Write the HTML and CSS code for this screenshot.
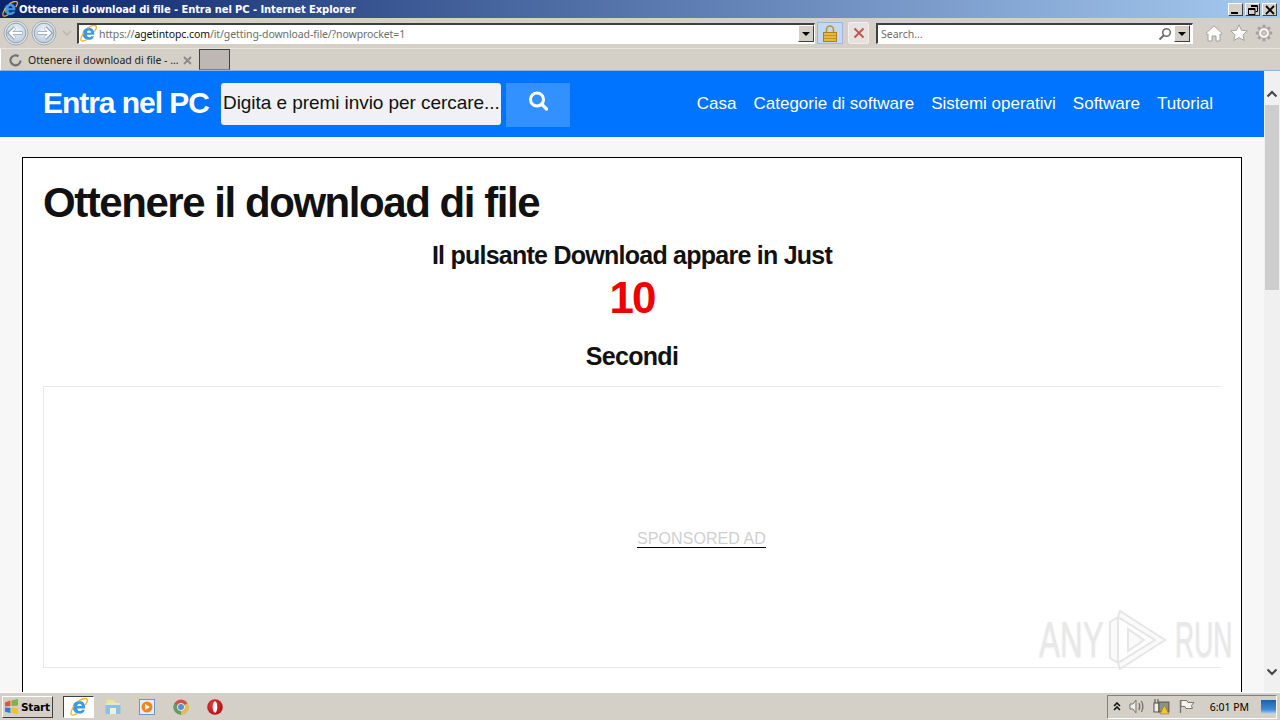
FILE: index.html
```html
<!DOCTYPE html>
<html lang="it">
<head>
  <meta charset="UTF-8" />
  <title>Ottenere il download di file - Entra nel PC</title>
  <link rel="stylesheet" href="styles.css">
</head>
<body>
  <svg class="defs" width="0" height="0">
    <defs>
      <radialGradient id="nav-fill" cx="50%" cy="35%" r="70%">
        <stop offset="0" stop-color="#eef3f8"/>
        <stop offset="1" stop-color="#b9cadb"/>
      </radialGradient>
      <radialGradient id="opera-fill" cx="40%" cy="35%" r="70%">
        <stop offset="0" stop-color="#ee3a3a"/>
        <stop offset="1" stop-color="#a80f14"/>
      </radialGradient>
    </defs>
    <symbol id="ie" viewBox="0 0 18 18">
      <path d="M2.800 9.800C2.800 5.500 5.700 3 9.400 3c3.800 0 6 2.700 5.700 7.400H7.300c.2 1.700 1.100 2.600 2.500 2.600 1 0 1.700-.4 2.100-1.200h3c-.8 2.500-2.900 3.900-5.300 3.900-3.800 0-6.800-2.500-6.800-5.900zM7.300 8.100h4.500C11.700 6.700 10.800 5.800 9.500 5.800 8.300 5.800 7.500 6.700 7.300 8.100z" fill="#3a9be6"/>
      <path d="M4 8C1.800 11.500.3 14.800 1.200 16.300c.9 1.400 3.600.6 6-1M8 3.500C11.500 1 15.500-.2 16.800 1c1 1 .3 3.500-1.500 6" fill="none" stroke="#efb529" stroke-width="1.400"/>
    </symbol>
    <symbol id="nav-arrow" viewBox="0 0 26 26">
      <circle cx="13" cy="13" r="12" fill="#dfe3e6" stroke="#a4aab0"/>
      <circle cx="13" cy="13" r="9.800" fill="url(#nav-fill)" stroke="#8fa1b3"/>
      <path d="M6.500 13h13M12 7.500L6.500 13l5.500 5.500" fill="none" stroke="#8ea2b6" stroke-width="3.600"/>
      <path d="M7 13h12M12 8L7 13l5 5" fill="none" stroke="#fff" stroke-width="2"/>
    </symbol>
  </svg>

  <div class="title-bar">
    <svg class="title-icon"><use href="#ie"/></svg>
    <span class="title-text">Ottenere il download di file - Entra nel PC - Internet Explorer</span>
    <div class="win-btns">
      <span class="win-btn"><i class="min-glyph"></i></span>
      <span class="win-btn"><svg width="10" height="10" viewBox="0 0 10 10"><path d="M3 .5h6.500v6H7.500M.5 3.500h6.500v6H.5zM.5 4.500h6.500M3 1.500h6.500" fill="none" stroke="#000"/></svg></span>
      <span class="win-btn"><svg width="10" height="10" viewBox="0 0 10 10"><path d="M1 1l8 8M9 1l-8 8" stroke="#000" stroke-width="1.800"/></svg></span>
    </div>
  </div>

  <div class="nav-bar">
    <div class="nav-arrows">
      <svg class="arrow"><use href="#nav-arrow"/></svg>
      <svg class="arrow flipped"><use href="#nav-arrow"/></svg>
      <svg class="arrow-drop" width="10" height="6" viewBox="0 0 10 6"><path d="M1 1l4 4 4-4" fill="none" stroke="#b8b4ac" stroke-width="1.400"/></svg>
    </div>
    <div class="field address">
      <svg class="addr-icon"><use href="#ie"/></svg>
      <span class="url">https://<b>agetintopc.com</b>/it/getting-download-file/?nowprocket=1</span>
      <span class="drop"></span>
    </div>
    <span class="addr-btn lock">
      <svg width="14" height="17" viewBox="0 0 14 17"><path d="M3.500 8V4.500a3.500 3.500 0 0 1 7 0V8" fill="none" stroke="#b8952a" stroke-width="1.600"/><rect x=".5" y="7.500" width="13" height="9" fill="#e8b83a" stroke="#a8841c"/><path d="M1 10.500h12M1 13.500h12" stroke="#c4961f"/></svg>
    </span>
    <span class="addr-btn stop">
      <svg width="12" height="12" viewBox="0 0 12 12"><path d="M1.500 1.500l9 9M10.500 1.500l-9 9" stroke="#c8504a" stroke-width="1.800"/></svg>
    </span>
    <div class="field search">
      <span class="search-text">Search...</span>
      <svg class="search-icon" width="14" height="14" viewBox="0 0 14 14"><circle cx="8.500" cy="5.500" r="3.800" fill="none" stroke="#6b6b68" stroke-width="1.500"/><path d="M5.800 8.200L1.500 12.500" stroke="#6b6b68" stroke-width="2"/></svg>
      <span class="drop"></span>
    </div>
    <div class="tool-icons">
      <svg width="18" height="18" viewBox="0 0 18 18"><path d="M.8 9.500L9 1.800l8.200 7.700-1.500 1-.7-.6V17h-4v-5H7v5H3V9.900l-.7.6z" fill="#fdfdfc" stroke="#a3a29c"/></svg>
      <svg width="18" height="18" viewBox="0 0 18 18"><path d="M9 .8l2.500 5.500 5.800.6-4.300 3.900 1.200 5.700L9 13.600l-5.200 2.900L5 10.800.7 6.900l5.800-.6z" fill="#fdfdfc" stroke="#a3a29c"/></svg>
      <svg width="18" height="18" viewBox="0 0 18 18"><path d="M9 .8v3.500M9 13.700v3.500M.8 9h3.500M13.700 9h3.500M3.200 3.200l2.500 2.500M12.300 12.300l2.500 2.500M14.800 3.200l-2.500 2.500M5.700 12.300l-2.500 2.500" stroke="#a3a29c" stroke-width="3"/><circle cx="9" cy="9" r="5.500" fill="#f4f4f2" stroke="#a3a29c"/><circle cx="9" cy="9" r="2.300" fill="#d4d0c8" stroke="#a3a29c"/></svg>
    </div>
  </div>

  <div class="tab-bar">
    <div class="tab">
      <svg class="spinner" width="13" height="13" viewBox="0 0 13 13"><path d="M9.500 2.300A5 5 0 1 0 11.500 6.500" fill="none" stroke="#6f7473" stroke-width="2.200"/></svg>
      <span class="tab-title">Ottenere il download di file - ...</span>
      <svg class="tab-close" width="9" height="9" viewBox="0 0 9 9"><path d="M1 1l7 7M8 1L1 8" stroke="#8a8a88" stroke-width="1.800"/></svg>
    </div>
    <div class="new-tab"></div>
  </div>

  <div class="viewport">
    <div class="page">
      <header class="site-header">
        <a class="brand">Entra nel PC</a>
        <div class="site-search">Digita e premi invio per cercare...</div>
        <span class="search-btn">
          <svg width="22" height="22" viewBox="0 0 22 22"><circle cx="10" cy="9.500" r="6.500" fill="none" stroke="#fff" stroke-width="3"/><path d="M14.500 14l5 5" stroke="#fff" stroke-width="3.200" stroke-linecap="round"/></svg>
        </span>
        <nav class="site-nav">
          <a>Casa</a>
          <a>Categorie di software</a>
          <a>Sistemi operativi</a>
          <a>Software</a>
          <a>Tutorial</a>
        </nav>
      </header>

      <main class="content">
        <article class="card">
          <h1>Ottenere il download di file</h1>
          <h3 class="appears">Il pulsante Download appare in Just</h3>
          <div class="countdown">10</div>
          <h3 class="seconds">Secondi</h3>
          <div class="ad-box"><span class="ad-label">SPONSORED AD</span></div>
        </article>
      </main>

      <div class="watermark">
        <span class="wm-any">ANY</span>
        <svg width="60" height="62" viewBox="0 0 60 62"><path d="M2 13v36l8 5V8zM10 8l2-6 45 29-45 29-2-6 37-23zM20 20v22l16-11z" fill="#fafafa" stroke="#e6e6e6" stroke-width="2"/></svg>
        <span class="wm-run">RUN</span>
      </div>
    </div>

    <div class="scrollbar">
      <svg class="scroll-arrow" width="12" height="8" viewBox="0 0 12 8"><path d="M1.500 6.500L6 2l4.500 4.500" fill="none" stroke="#444" stroke-width="2"/></svg>
      <div class="thumb"></div>
      <svg class="scroll-arrow bottom" width="12" height="8" viewBox="0 0 12 8"><path d="M1.500 1.500L6 6l4.500-4.500" fill="none" stroke="#444" stroke-width="2"/></svg>
    </div>
  </div>

  <footer class="taskbar">
    <span class="start">
      <svg width="15" height="15" viewBox="0 0 14 14"><path d="M1 3l5-1.500v5L1 7z" fill="#e2582a"/><path d="M7 1.300L13 0v6l-6 .6z" fill="#7cb342"/><path d="M1 8l5 .1v5L1 12z" fill="#2f7ed8"/><path d="M7 8.200l6 .2v5.600l-6-1z" fill="#f2c12e"/></svg>
      Start
    </span>
    <span class="task-sep"></span>
    <span class="task-ie"><svg width="18" height="18"><use href="#ie"/></svg></span>
    <svg class="task-icon" width="18" height="18" viewBox="0 0 18 18"><path d="M3 2h7l2 3H3z" fill="#f0e29a"/><path d="M1.500 5h15v11h-15z" fill="#8cc2e0"/><path d="M6 10h6v6H6z" fill="#eef0e0"/><path d="M1.500 5h15v2h-15z" fill="#dfe8d8"/></svg>
    <svg class="task-icon" width="18" height="18" viewBox="0 0 18 18"><rect x="1.500" y="1.500" width="15" height="15" fill="#e7eef6" stroke="#6f96c8"/><circle cx="9" cy="9" r="5.500" fill="#ea8a1e"/><path d="M7.200 6l4.600 3-4.600 3z" fill="#fff"/></svg>
    <svg class="task-icon" width="18" height="18" viewBox="0 0 18 18"><circle cx="9" cy="9" r="7.500" fill="#c9544a"/><path d="M9 9L15.500 5.200A7.500 7.500 0 0 1 9 16.500z" fill="#e3c04c"/><path d="M9 9v7.500A7.500 7.500 0 0 1 2.500 5.200z" fill="#5f9e66"/><circle cx="9" cy="9" r="3.600" fill="#5a8fcc" stroke="#eee"/></svg>
    <svg class="task-icon" width="18" height="18" viewBox="0 0 18 18"><circle cx="9" cy="9" r="7.800" fill="url(#opera-fill)"/><ellipse cx="9" cy="9" rx="2.300" ry="5.800" fill="#fff"/></svg>
    <div class="tray">
      <svg width="8" height="9" viewBox="0 0 8 9"><path d="M1 4l3-3 3 3M1 8l3-3 3 3" fill="none" stroke="#111" stroke-width="1.600"/></svg>
      <svg width="16" height="15" viewBox="0 0 16 15"><path d="M1 5h3l3-4v13l-3-4H1z" fill="#f0eee8" stroke="#77756f"/><path d="M10 4c1 2 1 5 0 7M12.500 2c1.800 3.500 1.800 7.500 0 11" fill="none" stroke="#77756f" stroke-width="1.300"/></svg>
      <svg width="17" height="17" viewBox="0 0 17 17"><path d="M2 1v4M5 1v4" stroke="#444"/><rect x="1" y="5" width="5" height="9" fill="#f0eee6" stroke="#55534c"/><rect x="6" y="4" width="10" height="10" fill="#8d9287" stroke="#55534c"/><path d="M11.500 7.500l4.500 8.500H7z" fill="#f2c925" stroke="#8a6d10" stroke-width=".5"/></svg>
      <svg width="17" height="15" viewBox="0 0 17 15"><path d="M2.500 1v13" stroke="#77756f" stroke-width="1.400"/><path d="M3 1.500h6l1 2h6l-2.500 3 1 3H8l-1-2H3z" fill="#f5f3ee" stroke="#77756f"/></svg>
      <span class="clock">6:01 PM</span>
      <span class="show-desktop"></span>
    </div>
  </footer>
</body>
</html>
```

FILE: styles.css
```css
* { box-sizing: border-box; }
html, body {
  margin: 0;
  height: 720px;
  overflow: hidden;
}
body {
  display: flex;
  flex-direction: column;
  font-family: "Liberation Sans", Arial, sans-serif;
  background: #d4d0c8;
  color: #000;
}
.defs { position: absolute; }

/* IE window chrome */
.title-bar {
  height: 18px;
  flex: none;
  display: flex;
  align-items: center;
  padding: 0 3px 0 2px;
  background: linear-gradient(90deg, #0a246a, #a6caf0);
}
.title-icon { width: 16px; height: 16px; margin-right: 1px; flex: none; }
.title-text {
  font: bold 10px "DejaVu Sans", Tahoma, sans-serif;
  letter-spacing: -0.1px;
  color: #fff;
  white-space: nowrap;
}
.win-btns { margin-left: auto; display: flex; gap: 2px; padding-top: 1px; }
.win-btn {
  width: 15px;
  height: 13px;
  background: #d4d0c8;
  border: 1px solid;
  border-color: #fff #404040 #404040 #fff;
  display: flex;
  align-items: center;
  justify-content: center;
}
.min-glyph { width: 7px; height: 2px; background: #000; margin: 6px 2px 0 0; }

.nav-bar {
  height: 30px;
  flex: none;
  display: flex;
  align-items: center;
}
.nav-arrows { display: flex; align-items: center; width: 77px; padding-left: 3px; flex: none; }
.arrow { width: 26px; height: 26px; margin-right: 2px; flex: none; }
.flipped { transform: scaleX(-1); }
.arrow-drop { margin-left: 3px; }
.field {
  height: 21px;
  display: flex;
  align-items: center;
  background: #fff;
  border: 1px solid;
  border-color: #404040 #fff #fff #404040;
  border-top-width: 2px;
  border-left-width: 2px;
}
.address { width: 738px; flex: none; }
.addr-icon { width: 17px; height: 17px; margin: 0 2px 0 1px; flex: none; }
.url {
  font: 10.500px "Noto Sans", Tahoma, sans-serif;
  letter-spacing: -0.1px;
  color: #6d6d6d;
  white-space: nowrap;
}
.url b { font-weight: normal; color: #111; }
.drop {
  width: 16px;
  height: 17px;
  margin-left: auto;
  background: #d4d0c8;
  border: 1px solid;
  border-color: #fff #404040 #404040 #fff;
  display: flex;
  align-items: center;
  justify-content: center;
  flex: none;
}
.drop::after {
  content: "";
  border: 4px solid transparent;
  border-top: 4px solid #000;
  border-bottom: 0;
}
.addr-btn {
  height: 22px;
  flex: none;
  display: flex;
  align-items: center;
  justify-content: center;
}
.lock { width: 26px; margin-left: 2px; background: #c4d8f2; border: 1px solid #9cb8dc; }
.stop { width: 21px; margin-left: 5px; background: #e6e2e0; border: 1px solid #f1eeec; border-radius: 2px; }
.search { width: 317px; flex: none; margin-left: 7px; padding-left: 3px; }
.search-text {
  font: 10.500px "Noto Sans", Tahoma, sans-serif;
  color: #6d6d6d;
}
.search-icon { margin-left: auto; margin-right: 2px; flex: none; }
.search .drop { margin-left: 0; margin-right: 2px; }
.tool-icons { display: flex; gap: 7px; margin-left: 12px; flex: none; }

.tab-bar {
  height: 22px;
  flex: none;
  display: flex;
  border-top: 1px solid #e6e3dd;
}
.tab {
  width: 197px;
  display: flex;
  align-items: center;
  padding: 1px 0 0 8px;
  border-left: 1px solid #fff;
}
.tab-title {
  font: 10.500px "Noto Sans", Tahoma, sans-serif;
  color: #222;
  margin-left: 6px;
  white-space: nowrap;
}
.tab-close { margin-left: auto; margin-right: 5px; }
.new-tab {
  width: 31px;
  margin-left: 2px;
  background: #bdb8b4;
  border: 1px solid;
  border-color: #404040 #404040 #808080 #404040;
}

/* page inside the browser */
.viewport {
  height: 622px;
  flex: none;
  display: flex;
  position: relative;
  overflow: hidden;
  background: #f7f7f7;
  border-top: 1px solid #8fb4dc;
}
.page { flex: 1; min-width: 0; overflow: hidden; }
.site-header {
  height: 66px;
  display: flex;
  align-items: center;
  padding: 0 51px 0 43px;
  background: #0073ff;
}
.brand {
  width: 166px;
  padding-bottom: 2px;
  font-size: 30px;
  font-weight: bold;
  letter-spacing: -1.050px;
  white-space: nowrap;
  color: #fff;
}
.site-search {
  width: 280px;
  height: 42px;
  margin-left: 12px;
  padding: 0 0 2px 2px;
  display: flex;
  align-items: center;
  font-size: 19px;
  letter-spacing: -0.060px;
  color: #111;
  background: #f0f0f5;
  border-radius: 3px;
  white-space: nowrap;
  overflow: hidden;
}
.search-btn {
  width: 64px;
  height: 44px;
  margin: 2px 0 0 5px;
  padding-bottom: 8px;
  display: flex;
  align-items: center;
  justify-content: center;
  background: #3390ff;
}
.site-nav { margin-left: auto; display: flex; gap: 17px; }
.site-nav a { font-size: 17px; color: #fff; white-space: nowrap; }

.content { padding: 20px 22px 0; }
.card {
  width: 1220px;
  height: 640px;
  padding: 20px;
  background: #fff;
  border: 1px solid #000;
}
h1 {
  margin: 0;
  font-size: 42px;
  line-height: 50px;
  letter-spacing: -1.450px;
  color: #111;
}
h3 {
  margin: 0;
  text-align: center;
  font-size: 25px;
  letter-spacing: -0.700px;
  color: #111;
}
.appears { margin-top: 12px; line-height: 30px; letter-spacing: -0.750px; }
.countdown {
  margin-top: 2px;
  text-align: center;
  font-size: 44px;
  font-weight: bold;
  line-height: 52px;
  letter-spacing: -2px;
  color: #f00000;
}
.seconds { margin-top: 17px; line-height: 30px; }
.ad-box {
  height: 282px;
  margin-top: 15px;
  padding-left: 593px;
  display: flex;
  align-items: center;
  border: 1px solid #e8e8e8;
  border-right: 0;
}
.ad-label {
  margin-top: 24px;
  font-size: 16px;
  line-height: 17px;
  letter-spacing: 0.080px;
  color: #cfcfcf;
  border-bottom: 1px solid #000;
}

.watermark {
  position: absolute;
  left: 1039px;
  top: 538px;
  display: flex;
  align-items: center;
  font-size: 50px;
  line-height: 62px;
  color: #e8e8e8;
  text-shadow: 0 1px 3px #eeeeee;
}
.watermark span { display: block; transform-origin: left; white-space: nowrap; }
.wm-any { width: 69px; transform: scaleX(0.63); }
.wm-run { width: 58px; margin-left: 7px; transform: scaleX(0.53); }

.scrollbar {
  width: 16px;
  flex: none;
  display: flex;
  flex-direction: column;
  align-items: center;
  background: #f0f0f0;
}
.scroll-arrow { margin-top: 19px; flex: none; }
.scroll-arrow.bottom { margin-top: auto; margin-bottom: 16px; }
.thumb {
  width: 14px;
  height: 185px;
  margin-top: 7px;
  background: #cdcdcd;
}

/* windows taskbar */
.taskbar {
  height: 28px;
  flex: none;
  display: flex;
  align-items: center;
  padding-left: 2px;
  background: #d4d0c8;
  border-top: 1px solid #fff;
}
.start {
  width: 51px;
  height: 22px;
  display: flex;
  align-items: center;
  gap: 2px;
  padding-left: 1px;
  font: bold 10.500px "DejaVu Sans", Tahoma, sans-serif;
  letter-spacing: -0.2px;
  border: 1px solid;
  border-color: #fff #404040 #404040 #fff;
}
.task-sep { width: 10px; }
.task-ie {
  width: 31px;
  height: 22px;
  display: flex;
  align-items: center;
  justify-content: center;
  background: #fff;
  border: 1px solid;
  border-color: #404040 #fff #fff #404040;
}
.task-icon { margin-left: 16px; flex: none; }
.task-ie + .task-icon { margin-left: 10px; }
.tray {
  margin-left: auto;
  margin-right: 3px;
  width: 170px;
  height: 24px;
  display: flex;
  align-items: center;
  gap: 8px;
  padding-left: 5px;
  border: 1px solid;
  border-color: #808080 #fff #fff #808080;
}
.clock {
  font: 10.500px "Noto Sans", Tahoma, sans-serif;
  margin-left: 7px;
  white-space: nowrap;
}
.show-desktop {
  width: 15px;
  height: 14px;
  margin-left: 4px;
  background: linear-gradient(#1f5ea8, #3f8ed8 70%, #c6d8ea);
}
```
